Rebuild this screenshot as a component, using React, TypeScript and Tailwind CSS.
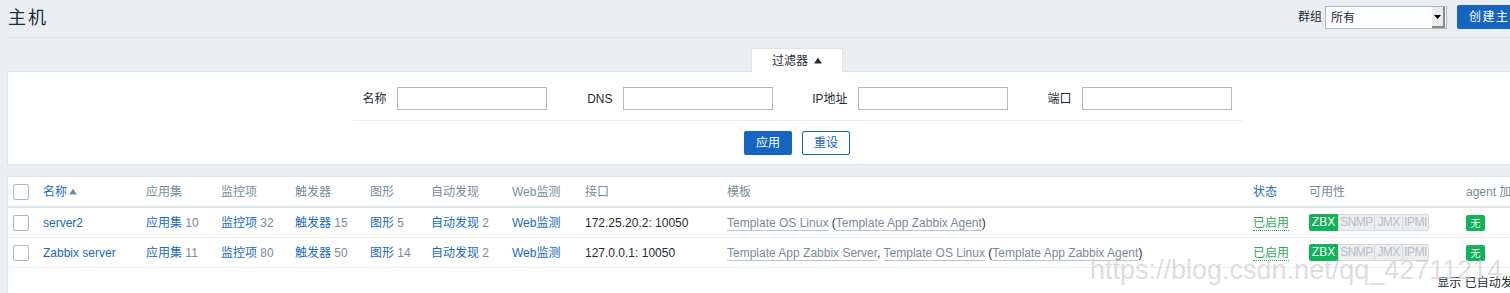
import React from 'react'

const blue = 'text-[#1a6bc0]'
const cols =
  'grid grid-cols-[30px_103px_75px_74px_75px_61px_81px_73px_142px_526px_56px_157px_1fr] items-center'

function Checkbox() {
  return (
    <span className="block h-[16px] w-[16px] rounded-[2px] border border-[#acbbc2] bg-white" />
  )
}

function Triangle({ className }: { className?: string }) {
  return (
    <svg width="8" height="7" viewBox="0 0 8 7" className={className}>
      <path d="M4 0.5 L7.8 6.5 L0.2 6.5 Z" fill="currentColor" />
    </svg>
  )
}

function FilterField({ label, cell }: { label: string; cell: string }) {
  return (
    <div className="flex items-center">
      <label className={`${cell} pr-[10px] text-right`}>{label}</label>
      <input className="h-[23px] w-[150px] border border-[#acbbc2] bg-white outline-none" />
    </div>
  )
}

function LinkCount({ label, count }: { label: string; count?: number }) {
  return (
    <span>
      <span className={blue}>{label}</span>
      {count !== undefined && <span className="text-[#768d99]"> {count}</span>}
    </span>
  )
}

function TplLink({ children }: { children: React.ReactNode }) {
  return (
    <span className="border-b border-[#768d99]/50 text-[#768d99]">{children}</span>
  )
}

const badges = [
  { t: 'SNMP', w: 'w-[36px]' },
  { t: 'JMX', w: 'w-[28px]' },
  { t: 'IPMI', w: 'w-[27px]' },
]

function Availability() {
  return (
    <div className="flex">
      <span className="h-[17px] w-[29px] rounded-l-[2px] border border-[#12b259] bg-[#12b259] text-center text-[12px] leading-[15px] text-white">
        ZBX
      </span>
      {badges.map((b, i) => (
        <span
          key={b.t}
          className={`h-[17px] ${b.w} border border-[#d5dadd] bg-[#ebeef0] text-center text-[12px] leading-[15px] tracking-[-0.6px] text-[#b6c1c7] ${
            i === 2 ? 'rounded-r-[2px]' : 'border-r-0'
          }`}
        >
          {b.t}
        </span>
      ))}
    </div>
  )
}

type Host = {
  name: string
  apps: number
  items: number
  triggers: number
  graphs: number
  discovery: number
  iface: string
  templates: React.ReactNode
}

const hosts: Host[] = [
  {
    name: 'server2',
    apps: 10,
    items: 32,
    triggers: 15,
    graphs: 5,
    discovery: 2,
    iface: '172.25.20.2: 10050',
    templates: (
      <>
        <TplLink>Template OS Linux</TplLink> (<TplLink>Template App Zabbix Agent</TplLink>)
      </>
    ),
  },
  {
    name: 'Zabbix server',
    apps: 11,
    items: 80,
    triggers: 50,
    graphs: 14,
    discovery: 2,
    iface: '127.0.0.1: 10050',
    templates: (
      <>
        <TplLink>Template App Zabbix Server</TplLink>, <TplLink>Template OS Linux</TplLink> (
        <TplLink>Template App Zabbix Agent</TplLink>)
      </>
    ),
  },
]

export default function App() {
  return (
    <div className="relative h-[293px] w-[1510px] overflow-hidden bg-[#ebeef0] font-['Liberation_Sans','Noto_Sans_CJK_SC',sans-serif] text-[12px] text-[#1f2c33]">
      <div className="w-[1594px] px-[7px]">
        {/* header */}
        <div className="flex h-[38px] items-start border-b border-[#dde3e6] pt-[5px]">
          <h1 className="ml-[1px] mt-[1px] text-[18px] font-normal leading-[24px] tracking-[2px]">
            主机
          </h1>
          <div className="ml-auto flex items-center">
            <span className="mr-[3px]">群组</span>
            <div className="mt-[1px] flex h-[23px] w-[122px] items-center border border-[#acbbc2] bg-white">
              <span className="flex-1 pl-[5px]">所有</span>
              <span className="mr-[1px] flex h-[21px] w-[13px] items-center justify-center border-b-2 border-r-2 border-[#8a8a8a] bg-[#ececec]">
                <svg width="7" height="4" viewBox="0 0 7 4">
                  <path d="M0 0 H7 L3.5 4 Z" fill="#000" />
                </svg>
              </span>
            </div>
            <button className="ml-[10px] h-[24px] w-[72px] rounded-[2px] bg-[#1565c0] pl-[1px] text-left indent-[11px] tracking-[1.5px] text-white">
              创建主机
            </button>
            <button className="ml-[10px] h-[24px] w-[48px] rounded-[2px] bg-[#1565c0] tracking-[1.5px] text-white">
              导入
            </button>
          </div>
        </div>

        {/* filter */}
        <div className="mt-[10px] flex justify-center">
          <div className="relative z-10 -mb-[1px] flex h-[24px] w-[92px] items-center justify-center gap-[6px] border border-b-0 border-[#dfe4e7] bg-white">
            <span>过滤器</span>
            <Triangle className="mb-[1px] text-[#1f2c33]" />
          </div>
        </div>
        <div className="border border-[#dfe4e7] bg-white pb-[9px] pt-[15px]">
          <div className="mx-auto w-[889px]">
            <div className="flex border-b border-[#ebeef0] pb-[10px]">
              <FilterField label="名称" cell="w-[44px]" />
              <FilterField label="DNS" cell="w-[76px]" />
              <FilterField label="IP地址" cell="w-[85px]" />
              <FilterField label="端口" cell="w-[74px]" />
            </div>
          </div>
          <div className="mt-[10px] flex justify-center gap-[10px]">
            <button className="h-[24px] w-[48px] rounded-[2px] bg-[#1565c0] text-white">应用</button>
            <button className="h-[24px] w-[48px] rounded-[2px] border border-[#1565c0] bg-white text-[#1565c0]">
              重设
            </button>
          </div>
        </div>

        {/* hosts table */}
        <div className="mt-[11px] h-[200px] border border-[#dfe4e7] bg-white">
          <div className={`${cols} h-[31px] border-b-2 border-[#dfe4e7] text-[#768d99]`}>
            <div className="pl-[5px]">
              <Checkbox />
            </div>
            <div className="flex items-center gap-[2px] pl-[5px]">
              <span className={blue}>名称</span>
              <Triangle className="text-[#768d99]" />
            </div>
            <div className="pl-[5px]">应用集</div>
            <div className="pl-[5px]">监控项</div>
            <div className="pl-[5px]">触发器</div>
            <div className="pl-[5px]">图形</div>
            <div className="pl-[5px]">自动发现</div>
            <div className="pl-[5px]">Web监测</div>
            <div className="pl-[5px]">接口</div>
            <div className="pl-[5px]">模板</div>
            <div className={`pl-[5px] ${blue}`}>状态</div>
            <div className="pl-[5px]">可用性</div>
            <div className="whitespace-nowrap pl-[5px]">agent 加密</div>
          </div>
          {hosts.map((h) => (
            <div key={h.name} className={`${cols} h-[30px] border-b border-[#ebeef0]`}>
              <div className="pl-[5px]">
                <Checkbox />
              </div>
              <div className={`pl-[5px] ${blue}`}>{h.name}</div>
              <div className="pl-[5px]">
                <LinkCount label="应用集" count={h.apps} />
              </div>
              <div className="pl-[5px]">
                <LinkCount label="监控项" count={h.items} />
              </div>
              <div className="pl-[5px]">
                <LinkCount label="触发器" count={h.triggers} />
              </div>
              <div className="pl-[5px]">
                <LinkCount label="图形" count={h.graphs} />
              </div>
              <div className="pl-[5px]">
                <LinkCount label="自动发现" count={h.discovery} />
              </div>
              <div className="pl-[5px]">
                <LinkCount label="Web监测" />
              </div>
              <div className="pl-[5px]">{h.iface}</div>
              <div className="whitespace-nowrap pl-[5px]">{h.templates}</div>
              <div className="pl-[5px]">
                <span className="border-b border-dotted border-[#2fa85a] text-[#2fa85a]">已启用</span>
              </div>
              <div className="pl-[5px]">
                <Availability />
              </div>
              <div className="pl-[5px]">
                <span className="inline-flex h-[16px] w-[19px] items-center justify-center rounded-[2px] bg-[#12b259] text-[10px] text-white">
                  无
                </span>
              </div>
            </div>
          ))}
          <div className="pr-[14px] pt-[8px] text-right leading-[15px]">显示 已自动发现 2 中的 2</div>
        </div>
      </div>

      {/* watermark */}
      <div className="pointer-events-none absolute left-[1090px] top-[250px] whitespace-nowrap text-[27px] text-[#c8c8c8]/60">
        https://blog.csdn.net/qq_42711214
      </div>
    </div>
  )
}
